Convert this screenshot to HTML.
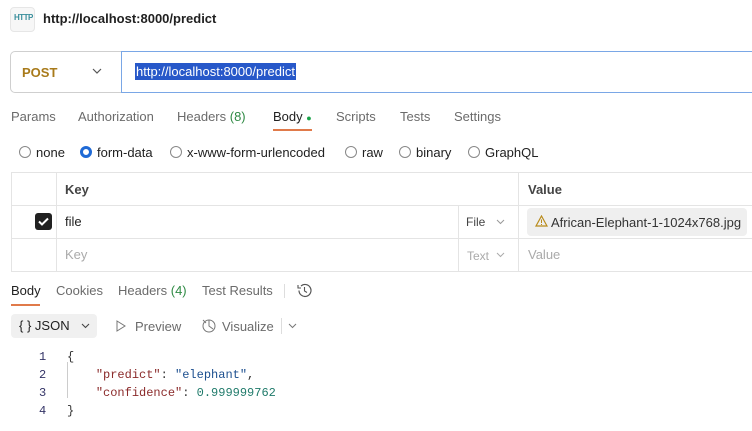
<!DOCTYPE html>
<html><head><meta charset="utf-8"><style>
*{box-sizing:border-box;margin:0;padding:0}
body{width:752px;height:431px;overflow:hidden;background:#fff;font-family:"Liberation Sans",sans-serif;font-size:13px;color:#212121;position:relative}
.a{position:absolute;white-space:nowrap}
.g{color:#6b6b6b}
.mono{font-family:"Liberation Mono",monospace;font-size:12px}
</style></head><body>
<div class="a" style="left:10px;top:7px;width:25px;height:25px;border:1px solid #e6e6e6;border-radius:4px;background:#f7f7f7"></div>
<div class="a" style="left:14px;top:13px;font-size:8px;color:#3a8f9c;font-weight:bold;letter-spacing:-0.5px">HTTP</div>
<div class="a" style="left:43px;top:11px;font-size:13px;font-weight:bold;color:#212121">http://localhost:8000/predict</div>

<div class="a" style="left:10px;top:51px;width:112px;height:42px;border:1px solid #cfcfcf;border-right:none;border-radius:5px 0 0 5px"></div>
<div class="a" style="left:22px;top:65px;font-weight:bold;color:#a87a1a">POST</div>
<svg class="a" style="left:92px;top:68px" width="10" height="7"><path d="M1 1l4 4 4-4" fill="none" stroke="#555" stroke-width="1.2"/></svg>
<div class="a" style="left:121px;top:51px;width:640px;height:42px;border:1px solid #7aa7e6;border-radius:0 5px 5px 0"></div>
<div class="a" style="left:135px;top:63px;background:#2758c9;color:#fff;padding:1px 1px;font-size:13px">http://localhost:8000/predict</div>

<div class="a g" style="left:11px;top:109px">Params</div>
<div class="a g" style="left:78px;top:109px">Authorization</div>
<div class="a g" style="left:177px;top:109px">Headers <span style="color:#2f8a44">(8)</span></div>
<div class="a" style="left:273px;top:109px">Body <span style="color:#1aa34a;font-size:9px">●</span></div>
<div class="a" style="left:273px;top:129px;width:39px;height:2px;background:#e07a4a"></div>
<div class="a g" style="left:336px;top:109px">Scripts</div>
<div class="a g" style="left:400px;top:109px">Tests</div>
<div class="a g" style="left:454px;top:109px">Settings</div>

<div class="a" style="left:19px;top:146px;width:12px;height:12px;border:1px solid #888;border-radius:50%"></div>
<div class="a" style="left:36px;top:145px">none</div>
<div class="a" style="left:80px;top:146px;width:12px;height:12px;border:3.5px solid #1f6ad6;border-radius:50%"></div>
<div class="a" style="left:97px;top:145px">form-data</div>
<div class="a" style="left:170px;top:146px;width:12px;height:12px;border:1px solid #888;border-radius:50%"></div>
<div class="a" style="left:187px;top:145px">x-www-form-urlencoded</div>
<div class="a" style="left:345px;top:146px;width:12px;height:12px;border:1px solid #888;border-radius:50%"></div>
<div class="a" style="left:362px;top:145px">raw</div>
<div class="a" style="left:399px;top:146px;width:12px;height:12px;border:1px solid #888;border-radius:50%"></div>
<div class="a" style="left:416px;top:145px">binary</div>
<div class="a" style="left:468px;top:146px;width:12px;height:12px;border:1px solid #888;border-radius:50%"></div>
<div class="a" style="left:485px;top:145px">GraphQL</div>

<!-- table -->
<div class="a" style="left:11px;top:172px;width:760px;height:100px;border:1px solid #e4e4e4"></div>
<div class="a" style="left:11px;top:205px;width:760px;height:1px;background:#e4e4e4"></div>
<div class="a" style="left:11px;top:238px;width:760px;height:1px;background:#e4e4e4"></div>
<div class="a" style="left:56px;top:172px;width:1px;height:100px;background:#e4e4e4"></div>
<div class="a" style="left:458px;top:205px;width:1px;height:67px;background:#e4e4e4"></div>
<div class="a" style="left:518px;top:172px;width:1px;height:100px;background:#e4e4e4"></div>
<div class="a" style="left:65px;top:182px;font-weight:bold;color:#444">Key</div>
<div class="a" style="left:528px;top:182px;font-weight:bold;color:#444">Value</div>
<div class="a" style="left:35px;top:213px;width:17px;height:17px;background:#212121;border-radius:3px"></div>
<svg class="a" style="left:35px;top:213px" width="17" height="17"><path d="M4 8.5l3 3 6-6" fill="none" stroke="#fff" stroke-width="2"/></svg>
<div class="a" style="left:65px;top:214px">file</div>
<div class="a" style="left:466px;top:215px;font-size:12px;color:#444">File</div>
<svg class="a" style="left:496px;top:219px" width="9" height="6"><path d="M1 1l3.5 3.5L8 1" fill="none" stroke="#999"/></svg>
<div class="a" style="left:527px;top:208px;width:220px;height:28px;background:#efefef;border-radius:4px"></div>
<svg class="a" style="left:535px;top:215px" width="13" height="12"><path d="M6.5 1L12 11H1z" fill="none" stroke="#b88a1a" stroke-width="1.2"/><path d="M6.5 4.5v3.5M6.5 9v1" stroke="#b88a1a"/></svg>
<div class="a" style="left:551px;top:215px;color:#333">African-Elephant-1-1024x768.jpg</div>
<div class="a" style="left:65px;top:247px;color:#aaa">Key</div>
<div class="a" style="left:467px;top:249px;font-size:12px;color:#aaa">Text</div>
<svg class="a" style="left:496px;top:252px" width="9" height="6"><path d="M1 1l3.5 3.5L8 1" fill="none" stroke="#aaa"/></svg>
<div class="a" style="left:528px;top:247px;color:#aaa">Value</div>

<!-- response -->
<div class="a" style="left:11px;top:283px">Body</div>
<div class="a" style="left:11px;top:304px;width:29px;height:2px;background:#e07a4a"></div>
<div class="a g" style="left:56px;top:283px">Cookies</div>
<div class="a g" style="left:118px;top:283px">Headers <span style="color:#2f8a44">(4)</span></div>
<div class="a g" style="left:202px;top:283px">Test Results</div>
<div class="a" style="left:284px;top:284px;width:1px;height:14px;background:#ddd"></div>
<svg class="a" style="left:296px;top:282px" width="17" height="17"><path d="M3 8.5a6 6 0 1 0 2-4.5" fill="none" stroke="#555" stroke-width="1.2"/><path d="M2 3v3h3" fill="none" stroke="#555" stroke-width="1.1"/><path d="M8.5 5v4l2.5 1.5" fill="none" stroke="#555" stroke-width="1.1"/></svg>

<div class="a" style="left:11px;top:314px;width:86px;height:24px;background:#f0f0f0;border-radius:4px"></div>
<div class="a" style="left:19px;top:318px;font-size:13px">{ } JSON</div>
<svg class="a" style="left:81px;top:323px" width="9" height="6"><path d="M1 1l3.5 3.5L8 1" fill="none" stroke="#444" stroke-width="1.1"/></svg>
<svg class="a" style="left:116px;top:320px" width="10" height="12"><path d="M1 1l8 5-8 5z" fill="none" stroke="#777"/></svg>
<div class="a g" style="left:135px;top:319px">Preview</div>
<svg class="a" style="left:200px;top:317px" width="17" height="17"><circle cx="9" cy="9" r="6" fill="none" stroke="#777"/><path d="M3 3l3 3M9 3v6l4 3" fill="none" stroke="#777"/></svg>
<div class="a g" style="left:222px;top:319px">Visualize</div>
<div class="a" style="left:281px;top:318px;width:1px;height:16px;background:#ddd"></div>
<svg class="a" style="left:288px;top:323px" width="9" height="6"><path d="M1 1l3.5 3.5L8 1" fill="none" stroke="#777"/></svg>

<div class="a mono" style="left:39px;top:348px;color:#336;line-height:18px">1<br>2<br>3<br>4</div>
<div class="a" style="left:67px;top:362px;width:1px;height:36px;background:#ccc"></div>
<div class="a mono" style="left:67px;top:348px;line-height:18px;color:#333">{<br>&nbsp;&nbsp;&nbsp;&nbsp;<span style="color:#8b2b2b">"predict"</span>: <span style="color:#1c4f8f">"elephant"</span>,<br>&nbsp;&nbsp;&nbsp;&nbsp;<span style="color:#8b2b2b">"confidence"</span>: <span style="color:#1f7a6a">0.999999762</span><br>}</div>
</body></html>
